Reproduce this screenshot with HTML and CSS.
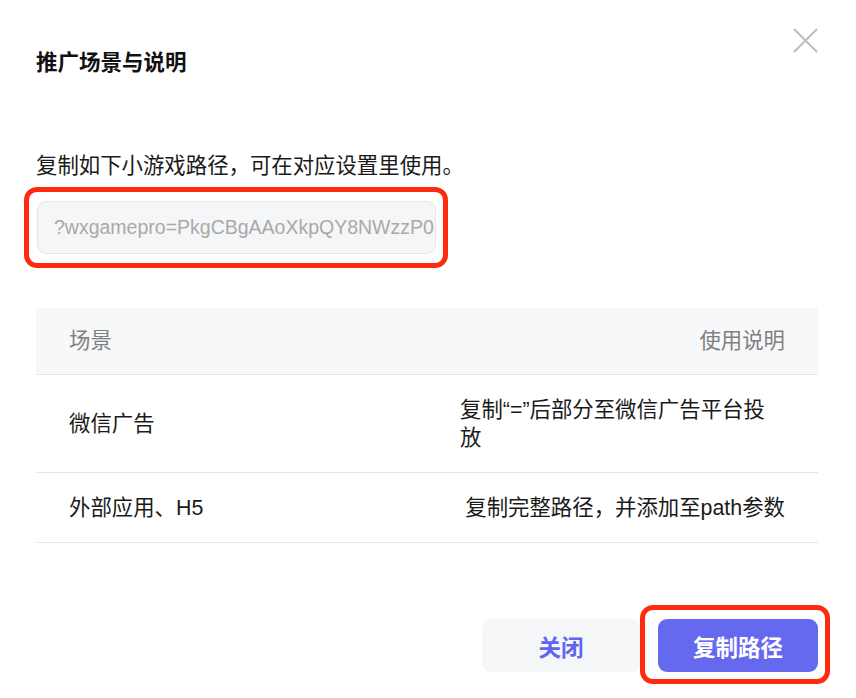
FILE: index.html
```html
<!DOCTYPE html>
<html lang="zh-CN">
<head>
  <meta charset="UTF-8">
  <meta name="viewport" content="width=device-width, initial-scale=1.0">
  <title>推广场景与说明</title>
  <link rel="stylesheet" href="styles.css">
</head>
<body>
  <div class="dialog">
    <button class="close-btn" aria-label="关闭">
      <svg width="25" height="25" viewBox="0 0 25 25">
        <path d="M1 1 L24 24 M24 1 L1 24" stroke="#bdbdbd" stroke-width="2" fill="none"/>
      </svg>
    </button>

    <h2 class="dialog-title">推广场景与说明</h2>

    <p class="hint">复制如下小游戏路径，可在对应设置里使用。</p>

    <!-- red annotation around the path field -->
    <div class="mark mark-input">
      <input class="path-input" type="text" readonly value="?wxgamepro=PkgCBgAAoXkpQY8NWzzP0MTk2NzY">
    </div>

    <table class="scene-table">
      <thead>
        <tr>
          <th class="col-scene">场景</th>
          <th class="col-desc">使用说明</th>
        </tr>
      </thead>
      <tbody>
        <tr>
          <td class="col-scene">微信广告</td>
          <td class="col-desc"><span class="desc-text">复制“=”后部分至微信广告平台投放</span></td>
        </tr>
        <tr>
          <td class="col-scene">外部应用、H5</td>
          <td class="col-desc"><span class="desc-text">复制完整路径，并添加至path参数</span></td>
        </tr>
      </tbody>
    </table>

    <div class="dialog-footer">
      <button class="btn btn-light">关闭</button>
      <div class="mark mark-btn">
        <button class="btn btn-primary">复制路径</button>
      </div>
    </div>
  </div>
</body>
</html>
```

FILE: styles.css
```css
* {
  margin: 0;
  padding: 0;
  box-sizing: border-box;
}

body {
  font-family: "Liberation Sans", "Noto Sans CJK SC", sans-serif;
  background-color: #fff;
  color: #1a1a1a;
}

.dialog {
  position: relative;
  width: 856px;
  height: 698px;
  padding: 48px 38px 0 36px;
  background-color: #fff;
}

.close-btn {
  position: absolute;
  top: 28px;
  right: 38px;
  width: 25px;
  height: 25px;
  background: none;
  border: none;
  cursor: pointer;
}

.close-btn svg {
  display: block;
}

.dialog-title {
  font-size: 21.5px;
  line-height: 30px;
  font-weight: 700;
  color: #111;
}

.hint {
  margin-top: 73px;
  font-size: 21.4px;
  line-height: 30px;
  color: #1a1a1a;
}

/* annotation boxes */
.mark {
  border: 5px solid #fe2a0e;
  border-radius: 13px;
}

.mark-input {
  width: 424px;
  margin: 6px 0 0 -12px;
  padding: 9px 8px;
}

.path-input {
  display: block;
  width: 399px;
  height: 53px;
  padding: 0 0 0 16px;
  font-family: "Liberation Sans", sans-serif;
  font-size: 19.5px;
  color: #a9a9a9;
  background-color: #f5f6f7;
  border: 1px solid #e4e6e9;
  border-radius: 9px;
  outline: none;
}

.scene-table {
  width: 782px;
  margin-top: 40px;
  border-collapse: collapse;
  font-size: 21.4px;
  line-height: 28px;
}

.scene-table th {
  font-weight: 400;
  color: #808080;
  background-color: #f7f8fa;
  padding: 19px 33px;
  border-bottom: 1px solid #e6e6e6;
}

.scene-table td {
  padding: 20px 33px;
  border-bottom: 1px solid #e6e6e6;
  color: #1a1a1a;
}

.scene-table tbody tr:first-child td {
  padding-top: 21px;
}

.scene-table tbody tr:last-child td {
  padding-top: 21px;
}

.col-scene {
  width: 50%;
  text-align: left;
}

.col-desc {
  text-align: right;
}

.desc-text {
  display: inline-block;
  max-width: 325px;
  text-align: left;
}

.dialog-footer {
  display: flex;
  justify-content: flex-end;
  align-items: flex-start;
  margin-top: 76px;
}

.mark-btn {
  margin: -14px -12px 0 0;
  padding: 9px 7px 7px 13px;
}

.btn {
  display: block;
  height: 53px;
  border: none;
  border-radius: 9px;
  font-family: "Liberation Sans", "Noto Sans CJK SC", sans-serif;
  font-size: 22.5px;
  font-weight: 700;
  cursor: pointer;
}

.btn-light {
  width: 158px;
  background-color: #f5f6f8;
  color: #6166ee;
}

.btn-primary {
  width: 160px;
  background-color: #6569f0;
  color: #fff;
}
```
